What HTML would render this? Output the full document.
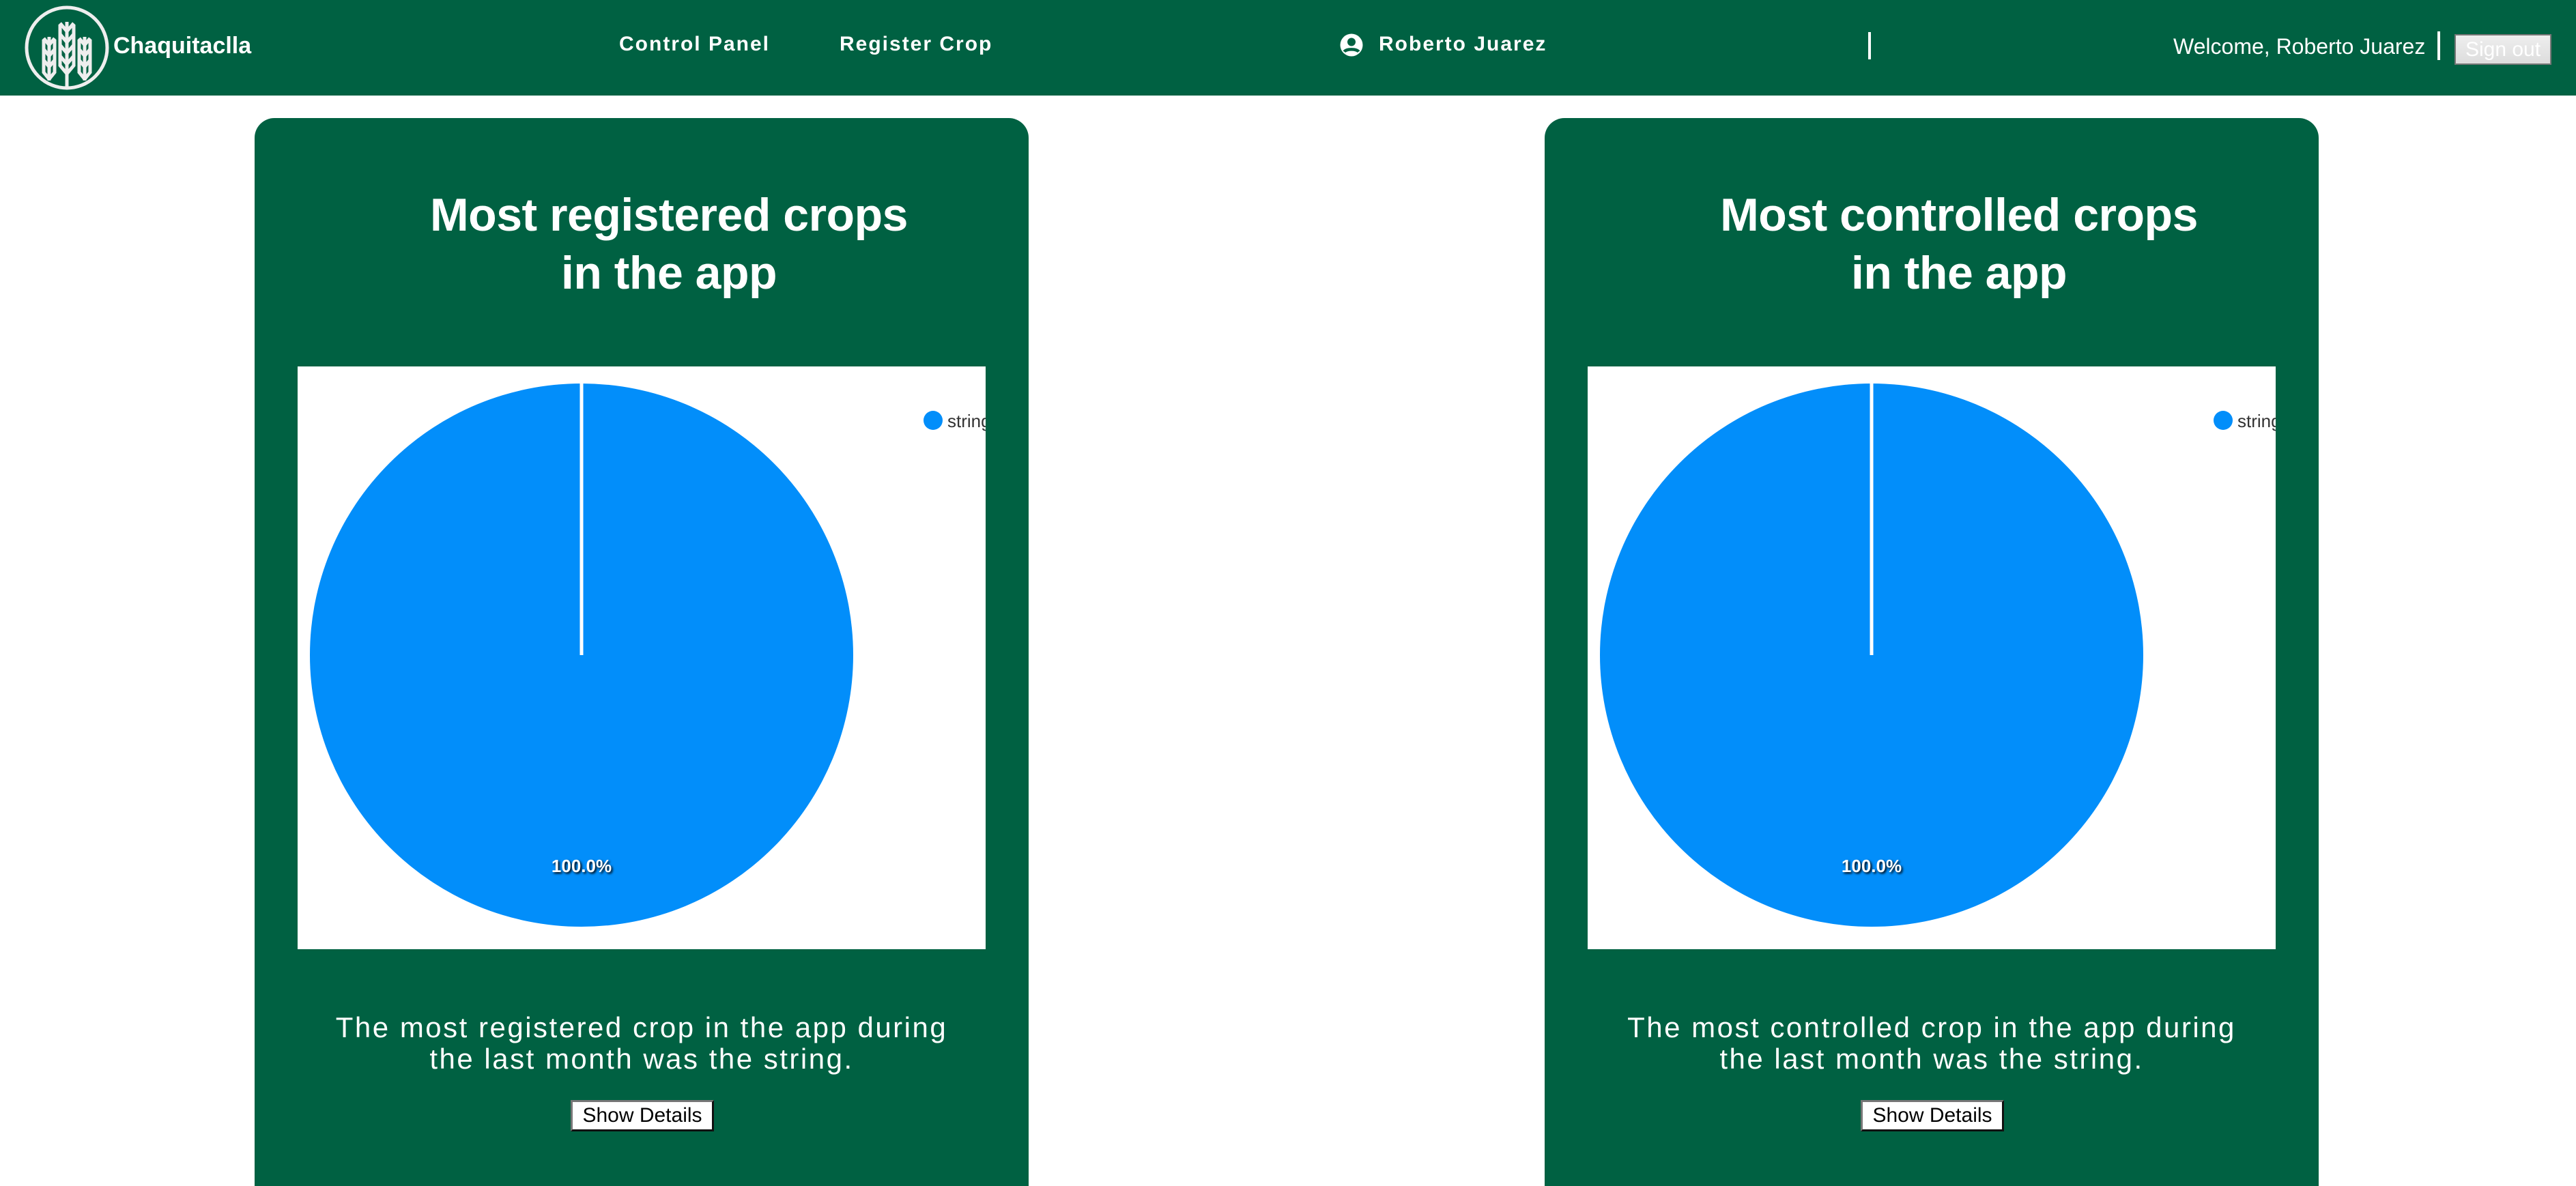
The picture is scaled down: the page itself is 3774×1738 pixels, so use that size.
<!DOCTYPE html>
<html><head><meta charset="utf-8"><style>
*{margin:0;padding:0;box-sizing:border-box}
html{width:3774px;height:1738px;overflow:hidden}
body{width:3774px;height:1738px;background:#fff;position:relative;overflow:hidden;font-family:"Liberation Sans",sans-serif}
.hdr{position:absolute;left:0;top:0;width:3774px;height:140px;background:#006142;color:#fff}
.abs{position:absolute;white-space:nowrap}
.nav{font-size:30px;letter-spacing:2px;font-weight:bold;top:48px}
.card{position:absolute;top:173px;width:1134px;height:1565px;background:#006142;border-radius:29px 29px 0 0}
.title{position:absolute;left:40px;right:-40px;top:100px;text-align:center;color:#fff;font-size:68px;line-height:85px;font-weight:bold;letter-spacing:-0.5px}
.chart{position:absolute;left:63px;top:364px;width:1008px;height:854px;background:#fff;overflow:hidden}
.desc{position:absolute;left:-40px;right:-40px;top:1310px;text-align:center;color:#fff;font-size:42px;line-height:46px;letter-spacing:2.5px}
.btn{position:absolute;left:463px;top:1439px;width:210px;height:46px;background:#fff;border:3px solid;border-color:#777 #111 #111 #777;font-size:30px;text-align:center;line-height:40px;color:#000}
</style></head><body>
<div class="hdr">
<svg class="abs" style="left:34px;top:6px" width="128" height="128" viewBox="0 0 128 128" fill="none" stroke="#eee" stroke-width="5">
<circle cx="64" cy="64" r="59"/>
<path d="M64 26V122M54 28l10 12 10-12M54 44l10 12 10-12M54 60l10 12 10-12M54 76l10 12 10-12M54 30v60l10 12M74 30v60l-10 12"/>
<path d="M38 48V112M30 50l8 10 8-10M30 66l8 10 8-10M30 82l8 10 8-10M30 52v48l8 10M46 52v48l-8 10"/>
<path d="M90 48V112M82 50l8 10 8-10M82 66l8 10 8-10M82 82l8 10 8-10M82 52v48l8 10M98 52v48l-8 10"/>
</svg>
<div class="abs" style="left:166px;top:48px;font-size:34px;font-weight:bold">Chaquitaclla</div>
<div class="abs nav" style="left:907px">Control Panel</div>
<div class="abs nav" style="left:1230px">Register Crop</div>
<svg class="abs" style="left:1962px;top:48px" width="36" height="36" viewBox="0 0 24 24"><circle cx="12" cy="12" r="11" fill="#fff"/><circle cx="12" cy="9" r="4" fill="#006142"/><path d="M5 18.5c2-3 12-3 14 0" stroke="#006142" stroke-width="3" fill="none"/></svg>
<div class="abs nav" style="left:2020px">Roberto Juarez</div>
<div class="abs" style="left:2737px;top:47px;width:4px;height:40px;background:#fff"></div>
<div class="abs" style="left:3184px;top:50px;font-size:32px">Welcome, Roberto Juarez</div>
<div class="abs" style="left:3571px;top:46px;width:4px;height:42px;background:#fff"></div>
<div class="abs" style="left:3596px;top:50px;width:142px;height:45px;background:linear-gradient(#eee,#ddd);border:2px solid #777;color:#fff;font-size:30px;text-align:center;line-height:41px">Sign out</div>
</div>

<div class="card" style="left:373px">
<div class="title">Most registered crops<br>in the app</div>
<div class="chart">
<svg width="1008" height="854"><circle cx="416" cy="423" r="398" fill="#028efa"/><line x1="416" y1="25" x2="416" y2="423" stroke="#fff" stroke-width="5"/>
<text x="416" y="741" text-anchor="middle" fill="#fff" font-size="26" font-weight="bold" font-family="Liberation Sans" style="text-shadow:2px 2px 3px #000">100.0%</text>
<circle cx="931" cy="79" r="14" fill="#028efa"/><text x="952" y="89" font-size="26" fill="#333" font-family="Liberation Sans">string</text></svg>
</div>
<div class="desc">The most registered crop in the app during<br>the last month was the string.</div>
<div class="btn">Show Details</div>
</div>

<div class="card" style="left:2263px">
<div class="title">Most controlled crops<br>in the app</div>
<div class="chart">
<svg width="1008" height="854"><circle cx="416" cy="423" r="398" fill="#028efa"/><line x1="416" y1="25" x2="416" y2="423" stroke="#fff" stroke-width="5"/>
<text x="416" y="741" text-anchor="middle" fill="#fff" font-size="26" font-weight="bold" font-family="Liberation Sans" style="text-shadow:2px 2px 3px #000">100.0%</text>
<circle cx="931" cy="79" r="14" fill="#028efa"/><text x="952" y="89" font-size="26" fill="#333" font-family="Liberation Sans">string</text></svg>
</div>
<div class="desc">The most controlled crop in the app during<br>the last month was the string.</div>
<div class="btn">Show Details</div>
</div>
</body></html>
